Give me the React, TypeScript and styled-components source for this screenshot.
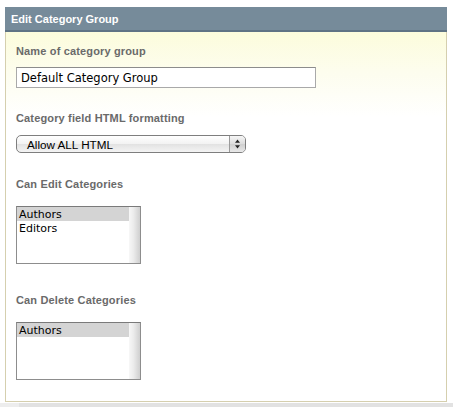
import styled, { createGlobalStyle } from "styled-components";

interface IOptionProps {
  $selected?: boolean;
}

interface IFieldProps {
  $gap: number;
  $top: number;
}

const EDIT_GROUPS = [
  { name: "Authors", selected: true },
  { name: "Editors", selected: false },
];

const DELETE_GROUPS = [{ name: "Authors", selected: true }];

const GlobalStyle = createGlobalStyle`
  html, body {
    margin: 0;
    padding: 0;
    background: #fff;
  }
  body {
    font-family: "Liberation Sans", Arial, sans-serif;
  }
`;

const PopupArrows = () => (
  <svg width="7" height="10" viewBox="0 0 7 10">
    <path d="M3.5 0.5 L6 3.8 L1 3.8 Z" fill="#222" />
    <path d="M3.5 9.5 L6 6.2 L1 6.2 Z" fill="#222" />
  </svg>
);

const GroupList = ({ groups }: { groups: { name: string; selected: boolean }[] }) => (
  <ListBox>
    <ListItems>
      {groups.map((g) => (
        <ListOption key={g.name} $selected={g.selected}>
          {g.name}
        </ListOption>
      ))}
    </ListItems>
    <ScrollTrack />
  </ListBox>
);

export default function App() {
  return (
    <>
      <GlobalStyle />
      <Page>
        <Panel>
          <PanelHeader>Edit Category Group</PanelHeader>
          <PanelBody>
            <Field $top={0} $gap={9}>
              <FieldLabel>Name of category group</FieldLabel>
              <TextInput defaultValue="Default Category Group" />
            </Field>
            <Field $top={24} $gap={10}>
              <FieldLabel>Category field HTML formatting</FieldLabel>
              <PopupButton>
                <PopupText>Allow ALL HTML</PopupText>
                <PopupStepper>
                  <PopupArrows />
                </PopupStepper>
              </PopupButton>
            </Field>
            <Field $top={25} $gap={15}>
              <FieldLabel>Can Edit Categories</FieldLabel>
              <GroupList groups={EDIT_GROUPS} />
            </Field>
            <Field $top={30} $gap={15}>
              <FieldLabel>Can Delete Categories</FieldLabel>
              <GroupList groups={DELETE_GROUPS} />
            </Field>
          </PanelBody>
        </Panel>
        <BottomBar>
          <BottomBarStart />
        </BottomBar>
      </Page>
    </>
  );
}

const Page = styled.div`
  padding-top: 7px;
  width: 453px;
  height: 407px;
  box-sizing: border-box;
  display: flex;
  flex-direction: column;
`;

const Panel = styled.div`
  margin: 0 6px 0 5px;
  border: 1px solid #d5cfae;
  border-top: none;
  display: flex;
  flex-direction: column;
`;

const PanelHeader = styled.div`
  margin: 0 -1px;
  height: 23px;
  padding-left: 6px;
  display: flex;
  align-items: center;
  background: #768b9a;
  border-bottom: 2px solid #5f7384;
  color: #fff;
  font-size: 11px;
  font-weight: bold;
`;

const PanelBody = styled.div`
  padding: 13px 10px 21px 10px;
  background: linear-gradient(#fcfcdc 0px, #fdfdee 40px, #ffffff 85px);
  display: flex;
  flex-direction: column;
`;

const Field = styled.div<IFieldProps>`
  margin-top: ${(props) => props.$top}px;
  display: flex;
  flex-direction: column;
  align-items: flex-start;
  gap: ${(props) => props.$gap}px;
`;

const FieldLabel = styled.label`
  color: #6a6a6a;
  font-size: 11px;
  font-weight: bold;
  line-height: 13px;
  letter-spacing: 0.15px;
`;

const TextInput = styled.input`
  width: 300px;
  height: 21px;
  box-sizing: border-box;
  margin: 0;
  padding: 0 0 0 4px;
  border: 1px solid #a9a9a9;
  border-top-color: #8c8c8c;
  background: #fff;
  font-family: "DejaVu Sans", "Liberation Sans", sans-serif;
  font-size: 11.5px;
  color: #000;
  outline: none;
`;

const PopupButton = styled.div`
  width: 230px;
  height: 18px;
  box-sizing: border-box;
  border: 1px solid #7e7e7e;
  border-radius: 5px;
  background: linear-gradient(#ffffff, #f2f2f2 50%, #e2e2e2 51%, #f4f4f4);
  display: flex;
  align-items: stretch;
  overflow: hidden;
`;

const PopupText = styled.span`
  flex: 1;
  padding-left: 10px;
  display: flex;
  align-items: center;
  font-family: "Liberation Sans", Arial, sans-serif;
  font-size: 11.7px;
  color: #000;
`;

const PopupStepper = styled.span`
  width: 15px;
  border-left: 1px solid #9a9a9a;
  background: linear-gradient(#f6f6f6, #dcdcdc 50%, #cfcfcf 51%, #e8e8e8);
  display: flex;
  align-items: center;
  justify-content: center;
`;

const ListBox = styled.div`
  width: 125px;
  height: 58px;
  box-sizing: border-box;
  border: 1px solid #8d8d8d;
  border-top-color: #7a7a7a;
  background: #fff;
  display: flex;
`;

const ListItems = styled.div`
  flex: 1;
  display: flex;
  flex-direction: column;
`;

const ListOption = styled.div<IOptionProps>`
  height: 14px;
  padding-left: 2px;
  display: flex;
  align-items: center;
  background: ${(props) => (props.$selected ? "#d4d4d4" : "transparent")};
  font-family: "DejaVu Sans", "Liberation Sans", sans-serif;
  font-size: 11px;
  color: #000;
`;

const ScrollTrack = styled.div`
  width: 11px;
  background: linear-gradient(to right, #f7f7f7, #ececec 40%, #cfcfcf);
`;

const BottomBar = styled.div`
  margin-top: auto;
  height: 4px;
  background: #e2e2e2;
  display: flex;
`;

const BottomBarStart = styled.div`
  width: 19px;
  background: #ededed;
`;
